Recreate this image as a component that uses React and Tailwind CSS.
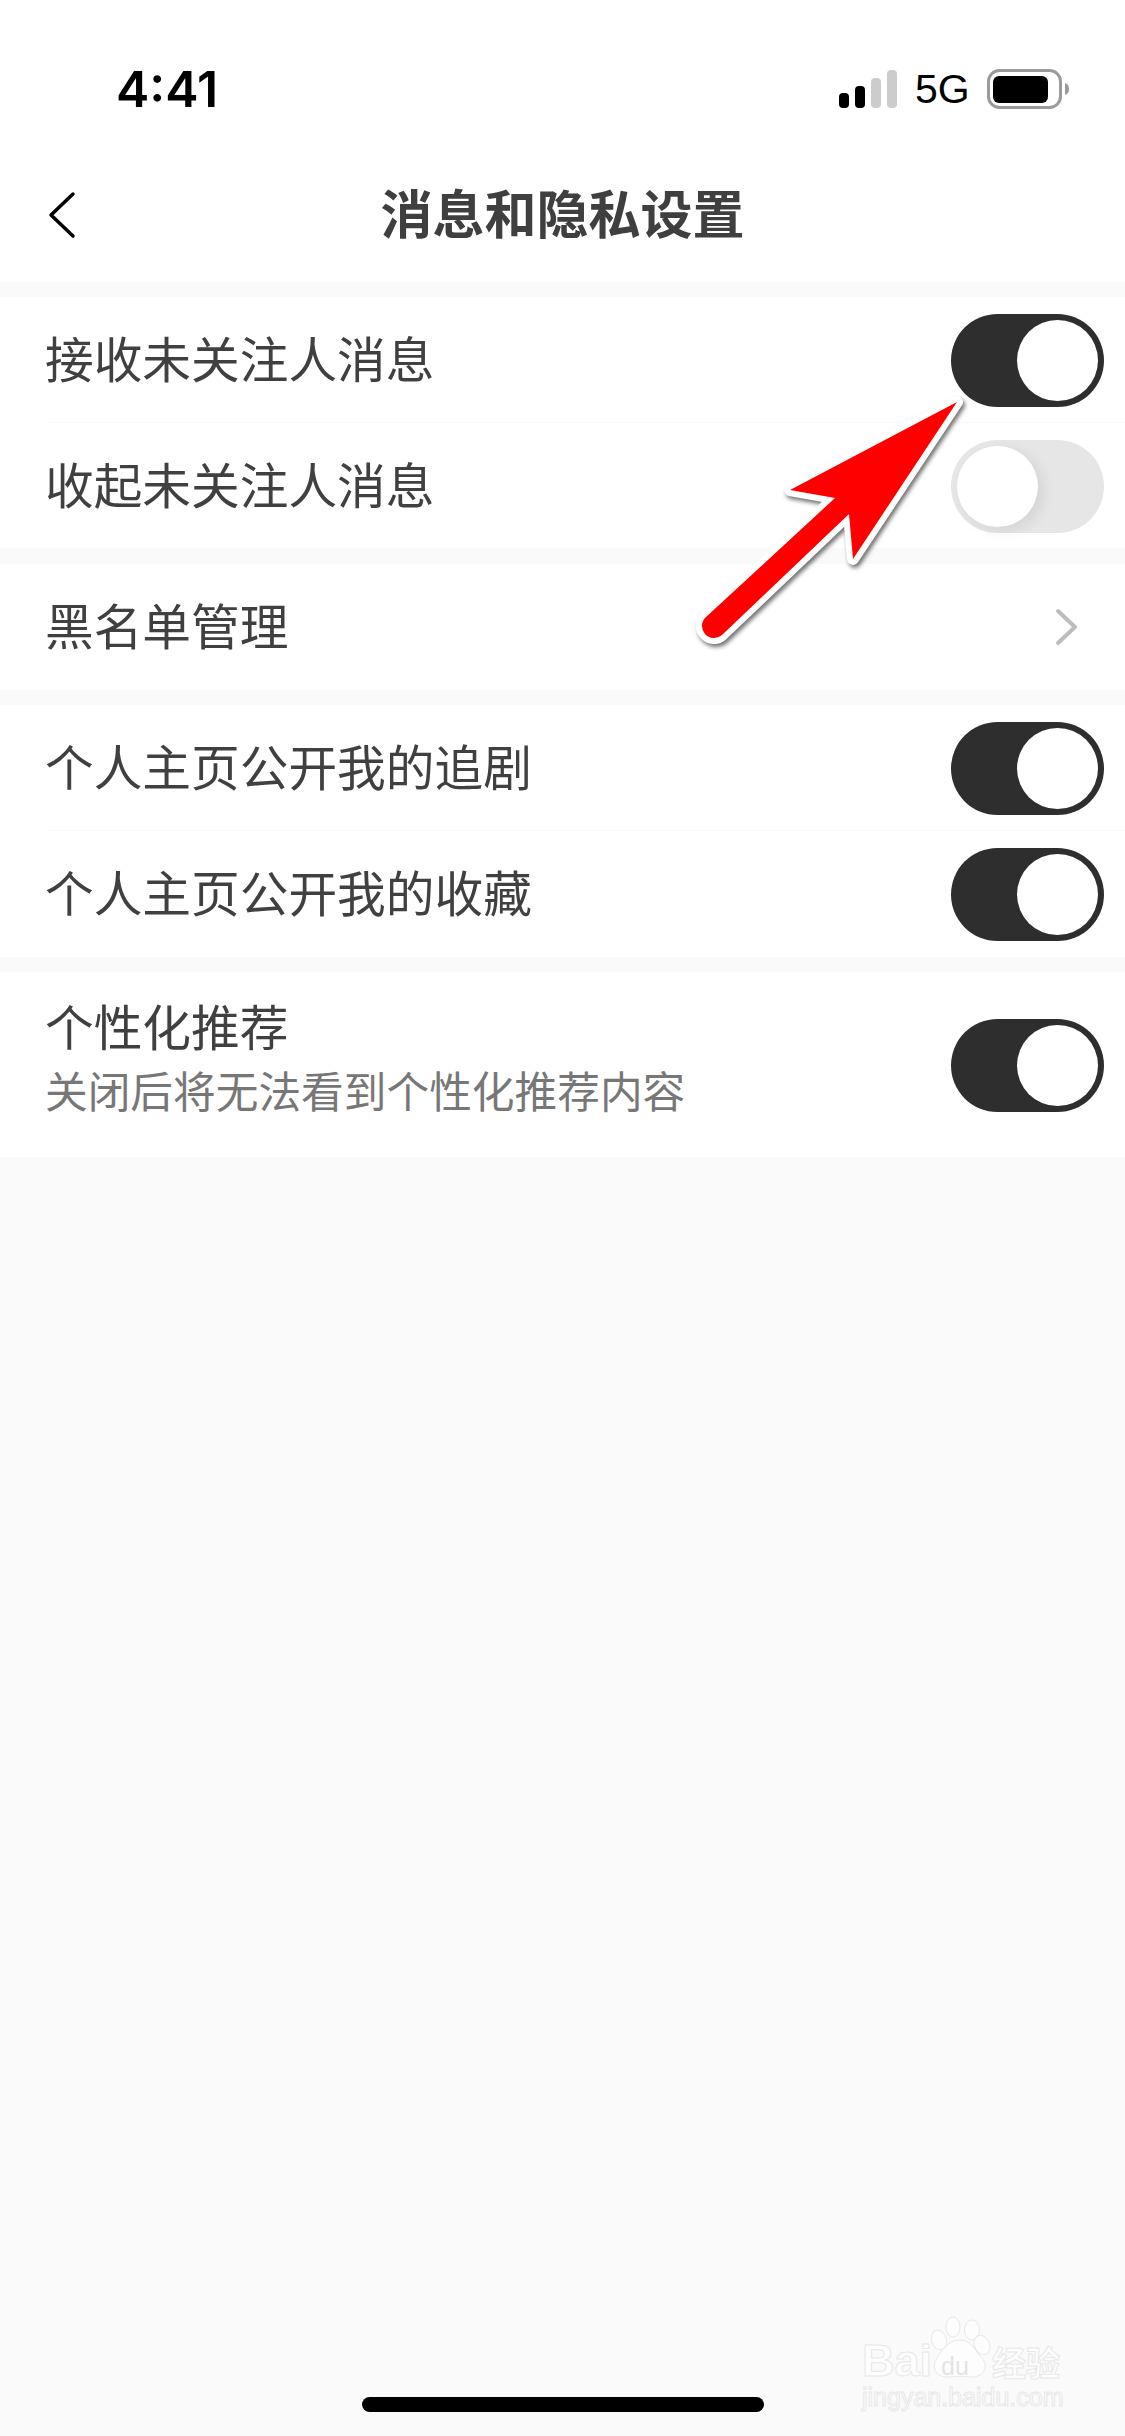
function Toggle({ on }) {
  return (
    <div className={`flex h-[93px] w-[153px] shrink-0 items-center rounded-full p-[6px] ${on ? "justify-end bg-[#2e2e2e]" : "justify-start bg-[#e6e6e6]"}`}>
      <div className={`h-[81px] w-[81px] rounded-full bg-white ${on ? "" : "shadow-[6px_4px_14px_rgba(0,0,0,0.08)]"}`} />
    </div>
  );
}

function Row({ label, on, tall }) {
  return (
    <div className={`flex items-center justify-between bg-white pl-[45px] pr-[21px] pt-[2px] ${tall ? "h-[126px] pb-px" : "h-[125px]"}`}>
      <span className="block pb-[8px] text-[48.7px] leading-[64px] text-[#404040]">{label}</span>
      <Toggle on={on} />
    </div>
  );
}

function Separator() {
  return <div className="ml-[46px] h-px bg-[#fafafa]" />;
}

function Arrow() {
  const d = "M957 402 L790 490 L835 498 L706 617 A12 12 0 0 0 722 635 L849 514 L853 559 Z";
  return (
    <svg
      className="absolute left-[680px] top-[380px] h-[280px] w-[300px] drop-shadow-[2px_3px_2px_rgba(0,0,0,0.55)]"
      viewBox="680 380 300 280"
      fill="none"
    >
      <path d={d} fill="#fe0000" stroke="#ffffff" strokeWidth="12" strokeLinejoin="round" paintOrder="stroke" />
    </svg>
  );
}

function Watermark() {
  const outline = "[-webkit-text-stroke:1px_#e8e8e8] text-[#fdfdfd]";
  return (
    <div className="absolute left-[860px] top-[2312px] h-[104px] w-[210px] font-['Liberation_Sans',sans-serif]">
      <span className={`absolute left-[2px] top-[24px] text-[45px] font-bold leading-[50px] ${outline}`}>Bai</span>
      <svg className="absolute left-[68px] top-0 h-[72px] w-[66px]" viewBox="0 0 66 72" fill="#fdfdfd" stroke="#e8e8e8" strokeWidth="1">
        <ellipse cx="25" cy="15" rx="7" ry="10" />
        <ellipse cx="44" cy="18" rx="7.5" ry="10" />
        <ellipse cx="11" cy="28" rx="7.5" ry="10" transform="rotate(-15 11 28)" />
        <ellipse cx="54" cy="33" rx="7.5" ry="10" transform="rotate(-25 54 33)" />
        <path d="M32 28 C44 28 46 38 54 46 C62 56 54 66 42 65 C34 64 30 64 22 65 C10 66 4 58 7 50 C12 40 20 28 32 28 Z" />
      </svg>
      <span className="absolute left-[81px] top-[38px] text-[25px] leading-[32px] text-[#e4e4e4]">du</span>
      <span className={`absolute left-[132px] top-[30px] font-['Noto_Sans_CJK_SC'] text-[34px] font-bold leading-[40px] ${outline}`}>经验</span>
      <span className={`absolute left-[2px] top-[70px] text-[25px] leading-[30px] ${outline}`}>jingyan.baidu.com</span>
    </div>
  );
}

export default function App() {
  return (
    <div className="relative flex h-[2436px] w-[1125px] flex-col overflow-hidden bg-[#fafafa] font-['Noto_Sans_CJK_SC','Noto_Sans',sans-serif]">
      <header className="h-[282px] shrink-0 bg-white">
        <div className="flex h-[112px] items-center justify-between pl-[116px] pr-[56px] pt-[66px]">
          <span className="font-['Inter',sans-serif] text-[50px] font-semibold leading-[46px] text-black">4:41</span>
          <div className="flex items-center">
            <svg className="h-[38px] w-[58px]" viewBox="0 0 58 38">
              <rect x="0" y="23" width="10" height="15" rx="4" fill="#000" />
              <rect x="16" y="16" width="10" height="22" rx="4" fill="#000" />
              <rect x="32" y="8" width="10" height="30" rx="4" fill="#cccccc" />
              <rect x="48" y="0" width="10" height="38" rx="4" fill="#cccccc" />
            </svg>
            <span className="ml-[18px] w-[72px] font-['Liberation_Sans',sans-serif] text-[41px] leading-[46px] text-black">5G</span>
            <svg className="h-[40px] w-[82px]" viewBox="0 0 82 40">
              <rect x="1.5" y="1.5" width="72" height="37" rx="11" fill="none" stroke="#9a9a9a" strokeWidth="3" />
              <rect x="6" y="7" width="55" height="27" rx="6" fill="#000" />
              <path d="M78 14 C81 15 82 17 82 20 C82 23 81 25 78 26 Z" fill="#9a9a9a" />
            </svg>
          </div>
        </div>
        <div className="mt-[58px] grid h-[90px] grid-cols-[1fr_auto_1fr] items-center">
          <div className="pl-[48px]">
            <svg className="h-[48px] w-[28px]" viewBox="0 0 28 48" fill="none" stroke="#000" strokeWidth="3.5" strokeLinecap="round" strokeLinejoin="round">
              <path d="M25 3 L3 24 L25 45" />
            </svg>
          </div>
          <h1 className="pb-[6px] text-[52px] font-bold leading-[64px] text-[#3f3f3f]">消息和隐私设置</h1>
          <div />
        </div>
      </header>

      <section className="mt-[15px] flex shrink-0 flex-col bg-white">
        <Row label="接收未关注人消息" on />
        <Separator />
        <Row label="收起未关注人消息" on={false} />
      </section>

      <section className="mt-[16px] flex h-[126px] shrink-0 items-center justify-between bg-white pl-[45px] pr-[47px]">
        <span className="block pb-[6px] text-[48.7px] leading-[64px] text-[#404040]">黑名单管理</span>
        <svg className="h-[38px] w-[23px]" viewBox="0 0 23 38" fill="none" stroke="#bdbdbd" strokeWidth="4" strokeLinecap="round" strokeLinejoin="round">
          <path d="M3 3 L20 19 L3 35" />
        </svg>
      </section>

      <section className="mt-[15px] flex shrink-0 flex-col bg-white">
        <Row label="个人主页公开我的追剧" on />
        <Separator />
        <Row label="个人主页公开我的收藏" on tall />
      </section>

      <section className="mt-[15px] flex h-[185px] shrink-0 items-center justify-between bg-white pl-[45px] pr-[21px] pt-[2px]">
        <div className="flex flex-col pb-[18px]">
          <span className="text-[48.7px] leading-[64px] text-[#404040]">个性化推荐</span>
          <span className="text-[42.7px] leading-[64px] text-[#777777]">关闭后将无法看到个性化推荐内容</span>
        </div>
        <Toggle on />
      </section>

      <div className="mt-auto mb-[24px] h-[15px] w-[402px] shrink-0 self-center rounded-full bg-black" />

      <Arrow />
      <Watermark />
    </div>
  );
}
